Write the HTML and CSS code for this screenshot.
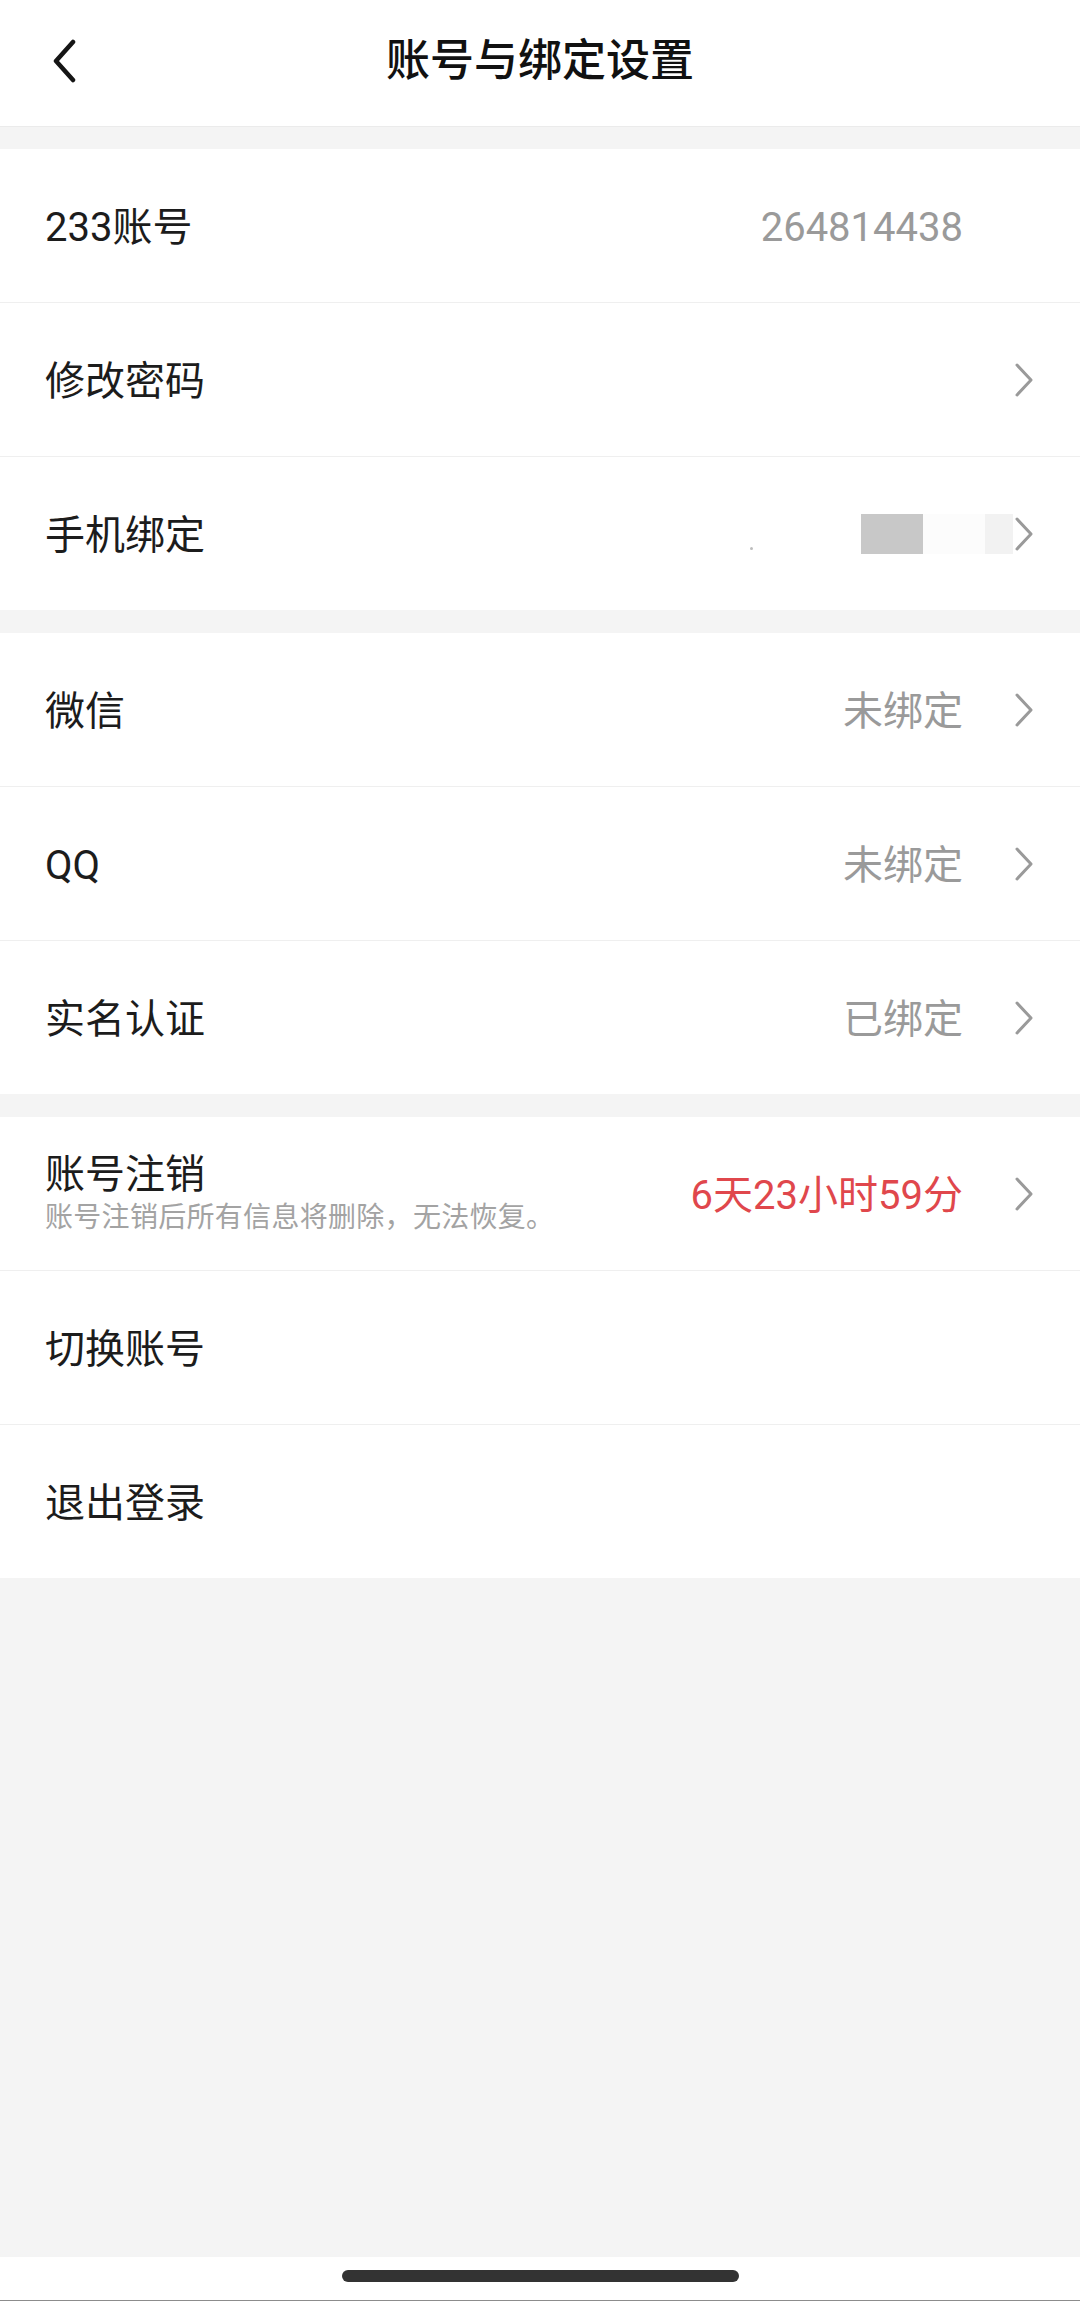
FILE: index.html
```html
<!DOCTYPE html>
<html lang="zh-CN">
<head>
<meta charset="utf-8">
<title>账号与绑定设置</title>
<link rel="stylesheet" href="styles.css">
</head>
<body>
<div class="page">
  <header class="header">
    <svg class="back" width="24" height="44" viewBox="0 0 24 44"><polyline points="21,3 4,22 21,41" fill="none" stroke="#151515" stroke-width="4.5" stroke-linecap="round" stroke-linejoin="round"/></svg>
    <h1 class="title">账号与绑定设置</h1>
  </header>

  <section class="group group-first">
    <div class="row">
      <span class="label">233账号</span>
      <span class="value">264814438</span>
      <svg class="chev hidden" width="18" height="34" viewBox="0 0 18 34"><polyline points="2,2 16,17 2,32" fill="none" stroke="#9a9a9a" stroke-width="3" stroke-linecap="round" stroke-linejoin="round"/></svg>
    </div>
    <div class="row">
      <span class="label">修改密码</span>
      <span class="value"></span>
      <svg class="chev" width="18" height="34" viewBox="0 0 18 34"><polyline points="2,2 16,17 2,32" fill="none" stroke="#9a9a9a" stroke-width="3" stroke-linecap="round" stroke-linejoin="round"/></svg>
    </div>
    <div class="row">
      <span class="label">手机绑定</span>
      <span class="mask">
        <i class="mask-dot"></i>
        <i class="mask-block mask-dark"></i>
        <i class="mask-block mask-faint"></i>
        <i class="mask-block mask-light"></i>
      </span>
      <svg class="chev chev-tight" width="18" height="34" viewBox="0 0 18 34"><polyline points="2,2 16,17 2,32" fill="none" stroke="#9a9a9a" stroke-width="3" stroke-linecap="round" stroke-linejoin="round"/></svg>
    </div>
  </section>

  <section class="group">
    <div class="row">
      <span class="label">微信</span>
      <span class="value">未绑定</span>
      <svg class="chev" width="18" height="34" viewBox="0 0 18 34"><polyline points="2,2 16,17 2,32" fill="none" stroke="#9a9a9a" stroke-width="3" stroke-linecap="round" stroke-linejoin="round"/></svg>
    </div>
    <div class="row">
      <span class="label">QQ</span>
      <span class="value">未绑定</span>
      <svg class="chev" width="18" height="34" viewBox="0 0 18 34"><polyline points="2,2 16,17 2,32" fill="none" stroke="#9a9a9a" stroke-width="3" stroke-linecap="round" stroke-linejoin="round"/></svg>
    </div>
    <div class="row">
      <span class="label">实名认证</span>
      <span class="value">已绑定</span>
      <svg class="chev" width="18" height="34" viewBox="0 0 18 34"><polyline points="2,2 16,17 2,32" fill="none" stroke="#9a9a9a" stroke-width="3" stroke-linecap="round" stroke-linejoin="round"/></svg>
    </div>
  </section>

  <section class="group">
    <div class="row">
      <div class="label-stack">
        <span class="label">账号注销</span>
        <span class="sub">账号注销后所有信息将删除，无法恢复。</span>
      </div>
      <span class="value value-red">6天23小时59分</span>
      <svg class="chev" width="18" height="34" viewBox="0 0 18 34"><polyline points="2,2 16,17 2,32" fill="none" stroke="#9a9a9a" stroke-width="3" stroke-linecap="round" stroke-linejoin="round"/></svg>
    </div>
    <div class="row">
      <span class="label">切换账号</span>
    </div>
    <div class="row">
      <span class="label">退出登录</span>
    </div>
  </section>

  <div class="filler"></div>
  <footer class="homebar"><span class="indicator"></span></footer>
</div>
</body>
</html>
```

FILE: styles.css
```css
* { box-sizing: border-box; }
html, body { margin: 0; padding: 0; }
body {
  background: #f4f4f4;
  font-family: Roboto, "Noto Sans CJK SC", "Noto Sans", sans-serif;
  color: #1c1c1c;
}
.page {
  width: 1080px;
  height: 2301px;
  display: flex;
  flex-direction: column;
}
.header {
  height: 127px;
  flex: none;
  background: #fff;
  border-bottom: 1px solid #ebebeb;
  display: flex;
  align-items: center;
  justify-content: center;
  position: relative;
}
.back {
  position: absolute;
  left: 52px;
  top: 39px;
}
.title {
  margin: 0 0 12px;
  font-size: 44px;
  font-weight: 500;
  color: #111;
  letter-spacing: 0;
}
.group {
  background: #fff;
  margin-top: 23px;
  flex: none;
}
.group-first { margin-top: 22px; }
.row {
  height: 154px;
  display: flex;
  align-items: center;
  padding: 4px 47px 0 45px;
  border-top: 1px solid #efefef;
}
.row:first-child { border-top: none; height: 153px; }
.label {
  font-size: 40px;
  color: #1c1c1c;
  line-height: 50px;
}
.label-stack {
  display: flex;
  flex-direction: column;
  margin-top: -6px;
}
.sub {
  font-size: 28px;
  line-height: 36px;
  color: #a3a3a3;
  letter-spacing: 0.3px;
}
.value {
  margin-left: auto;
  font-size: 40px;
  color: #9a9a9a;
  line-height: 50px;
}
.value-red { color: #e0474c; font-size: 40px; }
.chev {
  flex: none;
  margin-left: 52px;
  margin-top: -4px;
  display: block;
}
.chev.hidden { visibility: hidden; }
.chev-tight { margin-left: 2px; }
.mask {
  margin-left: auto;
  margin-top: -4px;
  display: flex;
  align-items: center;
}
.mask i { display: block; }
.mask-dot {
  width: 3px;
  height: 3px;
  border-radius: 50%;
  background: #bdbdbd;
  margin-top: 30px;
  margin-right: 108px;
}
.mask-block { height: 40px; }
.mask-dark { width: 62px; background: #c8c8c8; }
.mask-faint { width: 62px; background: #fcfcfc; }
.mask-light { width: 28px; background: #f2f2f2; }
.filler { flex: 1; }
.homebar {
  height: 44px;
  flex: none;
  background: #fff;
  border-bottom: 1px solid #8c8c8c;
  display: flex;
  justify-content: center;
  padding-top: 13px;
}
.indicator {
  display: block;
  width: 397px;
  height: 12px;
  border-radius: 6px;
  background: #333;
}
```
